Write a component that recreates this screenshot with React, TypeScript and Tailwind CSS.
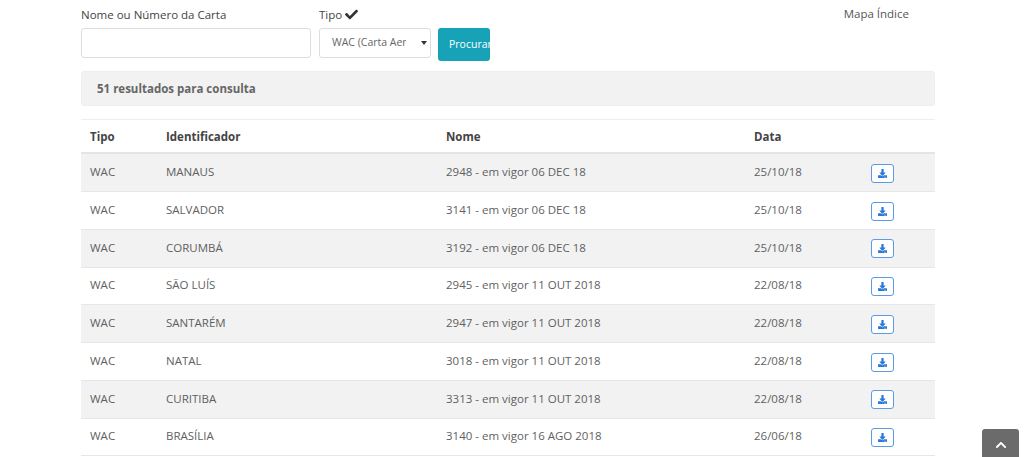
import { FaCheck, FaDownload, FaChevronUp } from 'react-icons/fa'

const rows = [
  { nome: 'MANAUS', edicao: '2948 - em vigor 06 DEC 18', data: '25/10/18' },
  { nome: 'SALVADOR', edicao: '3141 - em vigor 06 DEC 18', data: '25/10/18' },
  { nome: 'CORUMBÁ', edicao: '3192 - em vigor 06 DEC 18', data: '25/10/18' },
  { nome: 'SÃO LUÍS', edicao: '2945 - em vigor 11 OUT 2018', data: '22/08/18' },
  { nome: 'SANTARÉM', edicao: '2947 - em vigor 11 OUT 2018', data: '22/08/18' },
  { nome: 'NATAL', edicao: '3018 - em vigor 11 OUT 2018', data: '22/08/18' },
  { nome: 'CURITIBA', edicao: '3313 - em vigor 11 OUT 2018', data: '22/08/18' },
  { nome: 'BRASÍLIA', edicao: '3140 - em vigor 16 AGO 2018', data: '26/06/18' },
]

export default function App() {
  return (
    <div className="relative h-[457px] overflow-hidden bg-white font-['Open_Sans',sans-serif] text-[11.5px] text-[#5f5f5f]">
      <div className="ml-[81px] w-[854px]">
        <div className="flex h-[71px] pt-[6px]">
          <div className="w-[238px]">
            <div className="h-[22px] text-[11.5px] leading-[17px] text-[#444]">Nome ou Número da Carta</div>
            <input className="h-[30px] w-[230px] rounded-[3px] border border-[#ddd] bg-white" />
          </div>
          <div className="w-[119px]">
            <div className="flex h-[22px] items-start gap-[3px] text-[11.5px] leading-[17px] text-[#444]">
              Tipo <FaCheck className="mt-[2px] text-[13px] text-[#333]" />
            </div>
            <div className="relative h-[30px] w-[112px]">
              <select className="h-[30px] w-full appearance-none rounded-[3px] border border-[#ddd] bg-white pr-[24px] pl-[12px] text-[10.5px] text-[#666]">
                <option>WAC (Carta Aeronáutica Mundial)</option>
              </select>
              <div className="absolute top-[13px] left-[102px] h-0 w-0 border-x-[3px] border-t-[4px] border-x-transparent border-t-[#333]" />
            </div>
          </div>
          <div className="flex w-[52px] flex-col pt-[22px]">
            <div className="flex h-[33px] items-center overflow-hidden rounded-[3px] bg-[#17a2b8] pl-[11px] text-[10.5px] whitespace-nowrap text-white">
              Procurar
            </div>
          </div>
          <div className="flex-1 pr-[26px] text-right text-[11.5px] leading-[15px] text-[#555]">Mapa Índice</div>
        </div>

        <div className="flex h-[35px] items-center rounded-[3px] border border-[#eee] bg-[#f2f2f2] pl-[15px] font-bold text-[#666]">
          51 resultados para consulta
        </div>

        <div className="mt-[13px] flex h-[35.4px] items-center border-t border-b-2 border-t-[#eee] border-b-[#e4e4e4] font-bold text-[#444]">
          <div className="w-[85px] pl-[9px]">Tipo</div>
          <div className="w-[280px]">Identificador</div>
          <div className="w-[308px]">Nome</div>
          <div>Data</div>
        </div>

        {rows.map((row, i) => (
          <div
            key={row.nome}
            className={`flex h-[37.75px] items-center border-b border-[#e6e6e6] ${i % 2 === 0 ? 'bg-[#f2f2f2]' : 'bg-white'}`}
          >
            <div className="w-[85px] pb-[2px] pl-[9px]">WAC</div>
            <div className="w-[280px] pb-[2px]">{row.nome}</div>
            <div className="w-[308px] pb-[2px]">{row.edicao}</div>
            <div className="w-[117px] pb-[2px]">{row.data}</div>
            <div className="mt-[1px] flex h-[19px] w-[23px] items-center justify-center rounded-[3px] border border-[#5c9ae6] bg-white">
              <FaDownload className="text-[9px] text-[#2a78d8]" />
            </div>
          </div>
        ))}
      </div>

      <div className="absolute top-[429px] left-[982px] flex h-[40px] w-[37px] justify-center rounded-[3px] bg-[#6b6b6b] pt-[10px]">
        <FaChevronUp className="text-[12px] text-white" />
      </div>
    </div>
  )
}
